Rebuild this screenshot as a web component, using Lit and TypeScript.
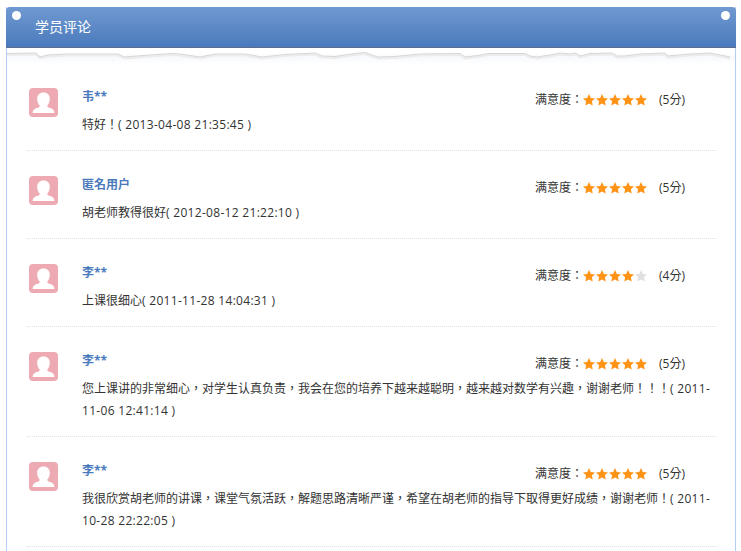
import { LitElement, html, css, svg } from "lit";
import { customElement } from "lit/decorators.js";

const reviews = [
  { name: "韦**", score: 5, text: "特好！", year: "( 2013-", date: "04-08 21:35:45 )" },
  { name: "匿名用户", score: 5, text: "胡老师教得很好", year: "( 2012-", date: "08-12 21:22:10 )" },
  { name: "李**", score: 4, text: "上课很细心", year: "( 2011-", date: "11-28 14:04:31 )" },
  { name: "李**", score: 5, text: "您上课讲的非常细心，对学生认真负责，我会在您的培养下越来越聪明，越来越对数学有兴趣，谢谢老师！！！", year: "( 2011-", date: "11-06 12:41:14 )" },
  { name: "李**", score: 5, text: "我很欣赏胡老师的讲课，课堂气氛活跃，解题思路清晰严谨，希望在胡老师的指导下取得更好成绩，谢谢老师！", year: "( 2011-", date: "10-28 22:22:05 )" },
];

const star = (on: boolean) => html`<svg class="star" viewBox="0 0 12 12"><path class=${on ? "on" : "off"} d="M6 0 7.800 3.900 12 4.400 8.900 7.300 9.700 11.600 6 9.500 2.300 11.600 3.100 7.300 0 4.400 4.200 3.900Z"/></svg>`;

const tear = "M7 53.500 36 53 40 57 48 55 68 54 118 54 124 57 150 55 172 53.500 180 54 200 57 215 54 245 54 262 57 285 54.500 315 53 322 56 335 56.500 355 53.500 365 52.500 372 55 378 57 395 56.500 420 54 460 53.500 465 57 478 55.500 488 53.500 525 53.500 530 56 537 57 550 55 560 53 570 54 576 53 580 56 590 53.500 612 53 617 56 625 56 640 54 665 53 668 56 690 54 710 53 730 57";

@customElement("app-root")
export class AppRoot extends LitElement {
  static styles = css`
    :host { display: block; height: 551px; overflow: hidden; background: #fff; font-family: "Open Sans", "Noto Sans CJK TC", sans-serif; font-size: 12px; color: #333; }
    .panel { margin: 7px 5px 0 6px; border-left: 1px solid #b4cdf2; border-right: 1px solid #b4cdf2; height: 544px; box-sizing: border-box; }
    .head { margin: 0 -1px; height: 41px; box-sizing: border-box; border-radius: 4px 4px 0 0; border-bottom: 1px solid #5b6f8d; background: linear-gradient(#7099d1, #4a7abc); display: flex; align-items: center; justify-content: space-between; padding: 0 6px; color: #fff; font-size: 14px; }
    .dot { width: 9px; height: 9px; border-radius: 50%; background: #fff; margin-top: -24px; }
    .title { flex: 1; margin-left: 14px; margin-top: -2px; }
    .torn { display: block; width: 100%; height: 16px; background: linear-gradient(#fff 30%, #f7f9fd 60%, #fff); }
    .torn path { fill: none; }
    .edge { stroke: #d6d6d6; stroke-width: 1; }
    .band { stroke: #ececec; stroke-width: 2; }
    .list { padding: 24px 18px 0 20px; }
    .item { display: flex; gap: 24px; padding-bottom: 14px; margin-bottom: 25px; border-bottom: 1px dotted #e2e2e2; }
    .avatar { flex: none; width: 29px; height: 29px; margin-left: 2px; }
    .body { flex: 1; min-width: 0; line-height: 22px; }
    .top { display: flex; justify-content: space-between; align-items: center; height: 28px; margin-top: -5px; padding-right: 32px; }
    .name { color: #4a7abc; font-weight: 700; }
    .rate { display: flex; align-items: center; margin-top: 6px; }
    .stars { display: flex; gap: 1px; margin-right: 12px; }
    .star { width: 12px; height: 12px; display: block; }
    .on { fill: #ff9316; }
    .off { fill: #e0e0e0; }
    .text { margin: 3px 0 0; padding-right: 5px; }
    .date { letter-spacing: .3px; }
  `;

  render() {
    return html`<div class="panel">
      <div class="head"><span class="dot"></span><span class="title">学员评论</span><span class="dot"></span></div>
      <svg class="torn" viewBox="7 48 728 16" preserveAspectRatio="none">
        ${svg`<path class="band" transform="translate(0 1.500)" d=${tear}/>`}
        ${svg`<path class="edge" d=${tear}/>`}
      </svg>
      <div class="list">
        ${reviews.map(r => html`<div class="item">
          <svg class="avatar" viewBox="0 0 29 29"><rect width="29" height="29" rx="4" fill="#eeaab2"/><path fill="#fff" d="M14.500 4.500c4 0 6.300 2.600 6.300 6.300 0 3-1 5.200-2.500 6.700 0 1.500 1 2 3 2.600 2.500.8 3.700 1.900 4.200 5H3.500c.5-3.100 1.700-4.200 4.200-5 2-.6 3-1.100 3-2.600C9.200 16 8.200 13.800 8.200 10.800 8.200 7.100 10.500 4.500 14.500 4.500Z"/></svg>
          <div class="body">
            <div class="top"><span class="name">${r.name}</span>
              <span class="rate">满意度：<span class="stars">${[1,2,3,4,5].map(i => star(i <= r.score))}</span>(${r.score}分)</span></div>
            <p class="text"><span>${r.text}</span><span class="date">${r.year}</span><span class="date">${r.date}</span></p>
          </div>
        </div>`)}
      </div>
    </div>`;
  }
}
